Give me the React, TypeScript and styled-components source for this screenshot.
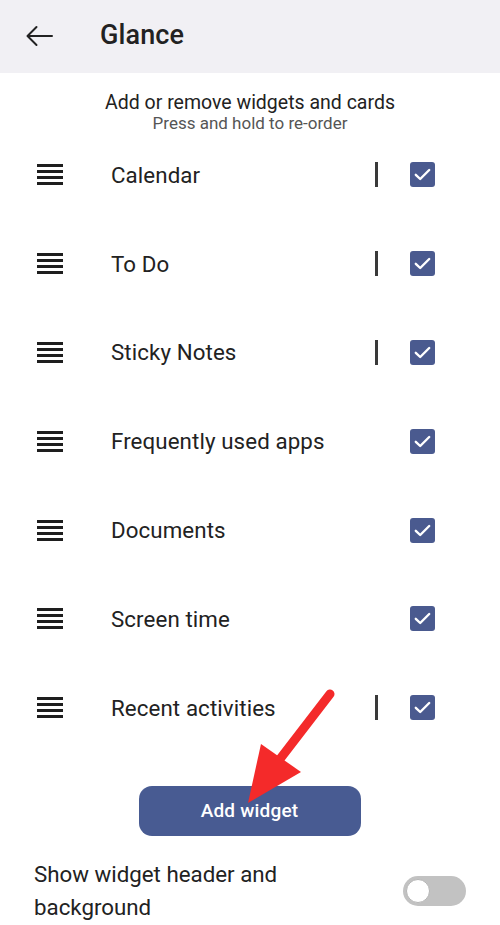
import React from "react";
import styled, { createGlobalStyle } from "styled-components";

const Global = createGlobalStyle`
  html, body { margin: 0; padding: 0; background: #ffffff; }
  body { font-family: Roboto, "Noto Sans", Arial, sans-serif; color: #212121; }
  * { box-sizing: border-box; }
`;

const Page = styled.div`
  position: relative;
  width: 500px;
  height: 925px;
  overflow: hidden;
  background: #fff;
  display: flex;
  flex-direction: column;
`;

const Header = styled.header`
  height: 73px;
  background: #f1f0f4;
  display: flex;
  align-items: center;
  padding-left: 25px;
  padding-bottom: 3px;
  flex-shrink: 0;
`;

const BackBtn = styled.div`
  width: 28px;
  height: 22px;
  display: flex;
  align-items: center;
  margin-right: 47px;
  margin-top: 1px;
`;

const Title = styled.h1`
  margin: 0;
  font-size: 27px;
  font-weight: 500;
  color: #222;
  letter-spacing: 0.1px;
`;

const Intro = styled.div`
  display: flex;
  flex-direction: column;
  align-items: center;
  padding-top: 19px;
  height: 57.5px;
`;

const IntroMain = styled.div`
  font-size: 19.5px;
  line-height: 22px;
  color: #222;
`;

const IntroSub = styled.div`
  font-size: 17px;
  line-height: 18px;
  color: #555;
`;

const List = styled.div`
  display: flex;
  flex-direction: column;
`;

const Row = styled.div`
  height: 88.8px;
  display: flex;
  align-items: center;
  padding-left: 37px;
`;

const Handle = styled.div`
  width: 26px;
  display: flex;
  flex-direction: column;
  gap: 3px;
  margin-right: 48px;
  & > span {
    display: block;
    height: 3px;
    background: #1e1e1e;
  }
`;

const Label = styled.div`
  flex: 1;
  font-size: 22.3px;
  color: #222;
  letter-spacing: 0.1px;
`;

const Cursor = styled.div<{ $show: boolean }>`
  width: 3px;
  height: 25px;
  background: ${(p) => (p.$show ? "#3a3a3a" : "transparent")};
  margin-right: 32px;
`;

const Check = styled.div`
  width: 25px;
  height: 25px;
  border-radius: 3px;
  background: #4a5a8f;
  display: flex;
  align-items: center;
  justify-content: center;
  margin-right: 65px;
`;

const ButtonWrap = styled.div`
  display: flex;
  justify-content: center;
  padding-top: 33.5px;
  padding-right: 1px;
`;

const AddButton = styled.button`
  width: 222px;
  height: 50px;
  border: none;
  border-radius: 13px;
  background: #485b92;
  color: #fff;
  font-family: Roboto, Arial, sans-serif;
  font-size: 19px;
  font-weight: 500;
  letter-spacing: 0.2px;
`;

const ToggleRow = styled.div`
  display: flex;
  align-items: center;
  padding: 22px 34px 0 34px;
`;

const ToggleLabel = styled.div`
  flex: 1;
  font-size: 22.3px;
  line-height: 33px;
  color: #222;
`;

const Track = styled.div`
  width: 63px;
  height: 30px;
  border-radius: 15px;
  background: #c2c2c2;
  display: flex;
  align-items: center;
  padding-left: 2px;
`;

const Knob = styled.div`
  width: 24px;
  height: 24px;
  border-radius: 50%;
  background: #fff;
  border: 1px solid #b5b5b5;
  margin-left: 1px;
`;

const Annotation = styled.svg`
  position: absolute;
  left: 0;
  top: 0;
  pointer-events: none;
`;

const items: { name: string; cursor: boolean }[] = [
  { name: "Calendar", cursor: true },
  { name: "To Do", cursor: true },
  { name: "Sticky Notes", cursor: true },
  { name: "Frequently used apps", cursor: false },
  { name: "Documents", cursor: false },
  { name: "Screen time", cursor: false },
  { name: "Recent activities", cursor: true },
];

export default function App() {
  return (
    <>
      <Global />
      <Page>
        <Header>
          <BackBtn>
            <svg width="28" height="22" viewBox="0 0 28 22">
              <path
                d="M27 11H3M11.5 2L2.5 11l9 9"
                fill="none"
                stroke="#222"
                strokeWidth="2"
                strokeLinecap="round"
                strokeLinejoin="round"
              />
            </svg>
          </BackBtn>
          <Title>Glance</Title>
        </Header>
        <Intro>
          <IntroMain>Add or remove widgets and cards</IntroMain>
          <IntroSub>Press and hold to re-order</IntroSub>
        </Intro>
        <List>
          {items.map((it) => (
            <Row key={it.name}>
              <Handle>
                <span />
                <span />
                <span />
                <span />
              </Handle>
              <Label>{it.name}</Label>
              <Cursor $show={it.cursor} />
              <Check>
                <svg width="17" height="13" viewBox="0 0 17 13">
                  <path
                    d="M1.8 6.8l4.4 4.2L15.2 2"
                    fill="none"
                    stroke="#fff"
                    strokeWidth="2.4"
                    strokeLinecap="round"
                    strokeLinejoin="round"
                  />
                </svg>
              </Check>
            </Row>
          ))}
        </List>
        <ButtonWrap>
          <AddButton>Add widget</AddButton>
        </ButtonWrap>
        <ToggleRow>
          <ToggleLabel>
            Show widget header and
            <br />
            background
          </ToggleLabel>
          <Track>
            <Knob />
          </Track>
        </ToggleRow>
        <Annotation width="500" height="925" viewBox="0 0 500 925">
          <line
            x1="330"
            y1="694"
            x2="280"
            y2="759"
            stroke="#f42a2a"
            strokeWidth="9"
            strokeLinecap="round"
          />
          <polygon points="261,744 301,772 248,803" fill="#f42a2a" />
        </Annotation>
      </Page>
    </>
  );
}
